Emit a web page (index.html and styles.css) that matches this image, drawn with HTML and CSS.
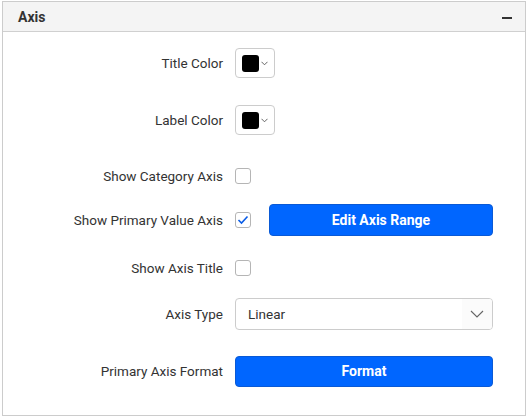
FILE: index.html
```
<!DOCTYPE html>
<html>
<head>
<meta charset="utf-8">
<link rel="stylesheet" href="styles.css">
</head>
<body>
<div class="panel">
  <div class="header">
    <span class="title">Axis</span>
    <span class="collapse"></span>
  </div>
  <div class="form">
    <div class="label">Title Color</div>
    <div class="ctrl"><div class="swatch"><span class="chip"></span><svg class="chev-s" width="7" height="5" viewBox="0 0 7 5"><path d="M0.5 0.8 L3.5 3.8 L6.5 0.8" fill="none" stroke="#555" stroke-width="0.9"/></svg></div></div>

    <div class="label">Label Color</div>
    <div class="ctrl"><div class="swatch"><span class="chip"></span><svg class="chev-s" width="7" height="5" viewBox="0 0 7 5"><path d="M0.5 0.8 L3.5 3.8 L6.5 0.8" fill="none" stroke="#555" stroke-width="0.9"/></svg></div></div>

    <div class="label">Show Category Axis</div>
    <div class="ctrl"><span class="check"></span></div>

    <div class="label">Show Primary Value Axis</div>
    <div class="ctrl"><span class="check"><svg width="12" height="10" viewBox="0 0 12 10"><path d="M1.5 5 L4.5 8 L10.5 1.5" fill="none" stroke="#0a5ce6" stroke-width="1.6"/></svg></span><button class="btn btn-edit">Edit Axis Range</button></div>

    <div class="label">Show Axis Title</div>
    <div class="ctrl"><span class="check"></span></div>

    <div class="label">Axis Type</div>
    <div class="ctrl"><div class="select"><span class="sel-text">Linear</span><span class="sel-icon"><svg width="14" height="8" viewBox="0 0 14 8"><path d="M1 1 L7 7 L13 1" fill="none" stroke="#666" stroke-width="1.1"/></svg></span></div></div>

    <div class="label">Primary Axis Format</div>
    <div class="ctrl"><button class="btn btn-full">Format</button></div>
  </div>
</div>
</body>
</html>
```
FILE: styles.css
```
html, body {
  margin: 0;
  padding: 0;
  background: #ffffff;
}
body {
  font-family: Roboto, "Liberation Sans", Arial, sans-serif;
  color: #333333;
  padding: 1px 1px 0 2px;
}
.panel {
  width: 522px;
  height: 413px;
  border: 1px solid #cccccc;
  background: #ffffff;
}
.header {
  height: 29px;
  background: #f4f4f4;
  border-bottom: 1px solid #d0d0d0;
  display: flex;
  align-items: center;
  justify-content: space-between;
  padding: 0 13px 0 15px;
}
.title {
  font-size: 14px;
  font-weight: bold;
  color: #333333;
  padding-top: 1px;
}
.collapse {
  width: 10px;
  height: 2px;
  background: #333333;
  margin-top: 2px;
}
.form {
  display: grid;
  grid-template-columns: 220px 258px;
  column-gap: 12px;
  grid-template-rows: 56px 58px 54px 34px 62px 30px 84px;
  padding-top: 3px;
  align-items: center;
}
.label {
  text-align: right;
  font-size: 13.5px;
  color: #333333;
}
.ctrl {
  display: flex;
  align-items: center;
}
.swatch {
  height: 28px;
  border: 1px solid #cccccc;
  border-radius: 4px;
  display: flex;
  align-items: center;
  padding-left: 6px;
  box-sizing: content-box;
  width: 32px;
}
.chip {
  width: 17px;
  height: 17px;
  background: #000000;
  border-radius: 3px;
}
.chev-s {
  margin-left: 2px;
  margin-top: 1px;
}
.check {
  width: 14px;
  height: 14px;
  border: 1px solid #b5b5b5;
  border-radius: 3px;
  display: flex;
  align-items: center;
  justify-content: center;
  background: #ffffff;
}
.btn {
  background: #0066ff;
  border: 1px solid #0a5ad6;
  border-radius: 4px;
  color: #ffffff;
  font-family: Roboto, "Liberation Sans", Arial, sans-serif;
  font-size: 14px;
  font-weight: bold;
  height: 32px;
  padding: 0;
}
.btn-edit {
  margin-left: 18px;
  width: 225px;
}
.btn-full {
  width: 259px;
  height: 31px;
}
.select {
  width: 257px;
  height: 30px;
  border: 1px solid #cccccc;
  border-radius: 4px;
  display: flex;
  align-items: center;
  justify-content: space-between;
  overflow: hidden;
}
.sel-text {
  font-size: 13.5px;
  color: #333333;
  padding-left: 12px;
}
.sel-icon {
  width: 30px;
  height: 30px;
  display: flex;
  align-items: center;
  justify-content: center;
  background: #fbfbfb;
}
```
